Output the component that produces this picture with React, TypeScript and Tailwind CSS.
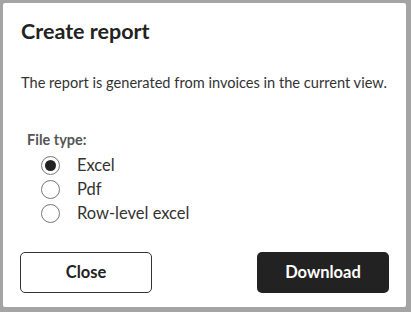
import React from "react";

const Radio = ({ checked, label }: { checked?: boolean; label: string }) => (
  <label className="flex items-center h-[24px]">
    <span className="ml-[21px] w-[19px] h-[19px] rounded-full border border-[#777] flex items-center justify-center bg-white">
      {checked && <span className="w-[11px] h-[11px] rounded-full bg-[#222]" />}
    </span>
    <span className="ml-[17px] text-[16.5px] text-[#333]">{label}</span>
  </label>
);

export default function App() {
  return (
    <div className="w-[411px] h-[312px] bg-[#a4a4a4] p-[3px] pr-[5px] pb-[5px]" style={{ fontFamily: 'Lato, "Noto Sans", sans-serif' }}>
      <div className="w-full h-full bg-white rounded-[2px] flex flex-col px-[17px]">
        <h1 className="mt-[14px] text-[21.5px] font-bold text-[#222] leading-[28px] ml-[1px]">Create report</h1>
        <p className="mt-[28px] text-[14.6px] text-[#333] leading-[20px] ml-[1px] whitespace-nowrap">The report is generated from invoices in the current view.</p>
        <div className="mt-[38px] text-[14.5px] font-bold text-[#555] leading-[18px] ml-[7px]">File type:</div>
        <div className="mt-[4px] flex flex-col">
          <Radio checked label="Excel" />
          <Radio label="Pdf" />
          <Radio label="Row-level excel" />
        </div>
        <div className="mt-[27px] flex justify-between">
          <button className="w-[132px] h-[41px] border border-[#333] rounded-[5px] text-[16.5px] font-bold text-[#222] bg-white">Close</button>
          <button className="w-[132px] h-[41px] rounded-[5px] text-[16.5px] font-bold text-white bg-[#222]">Download</button>
        </div>
      </div>
    </div>
  );
}
